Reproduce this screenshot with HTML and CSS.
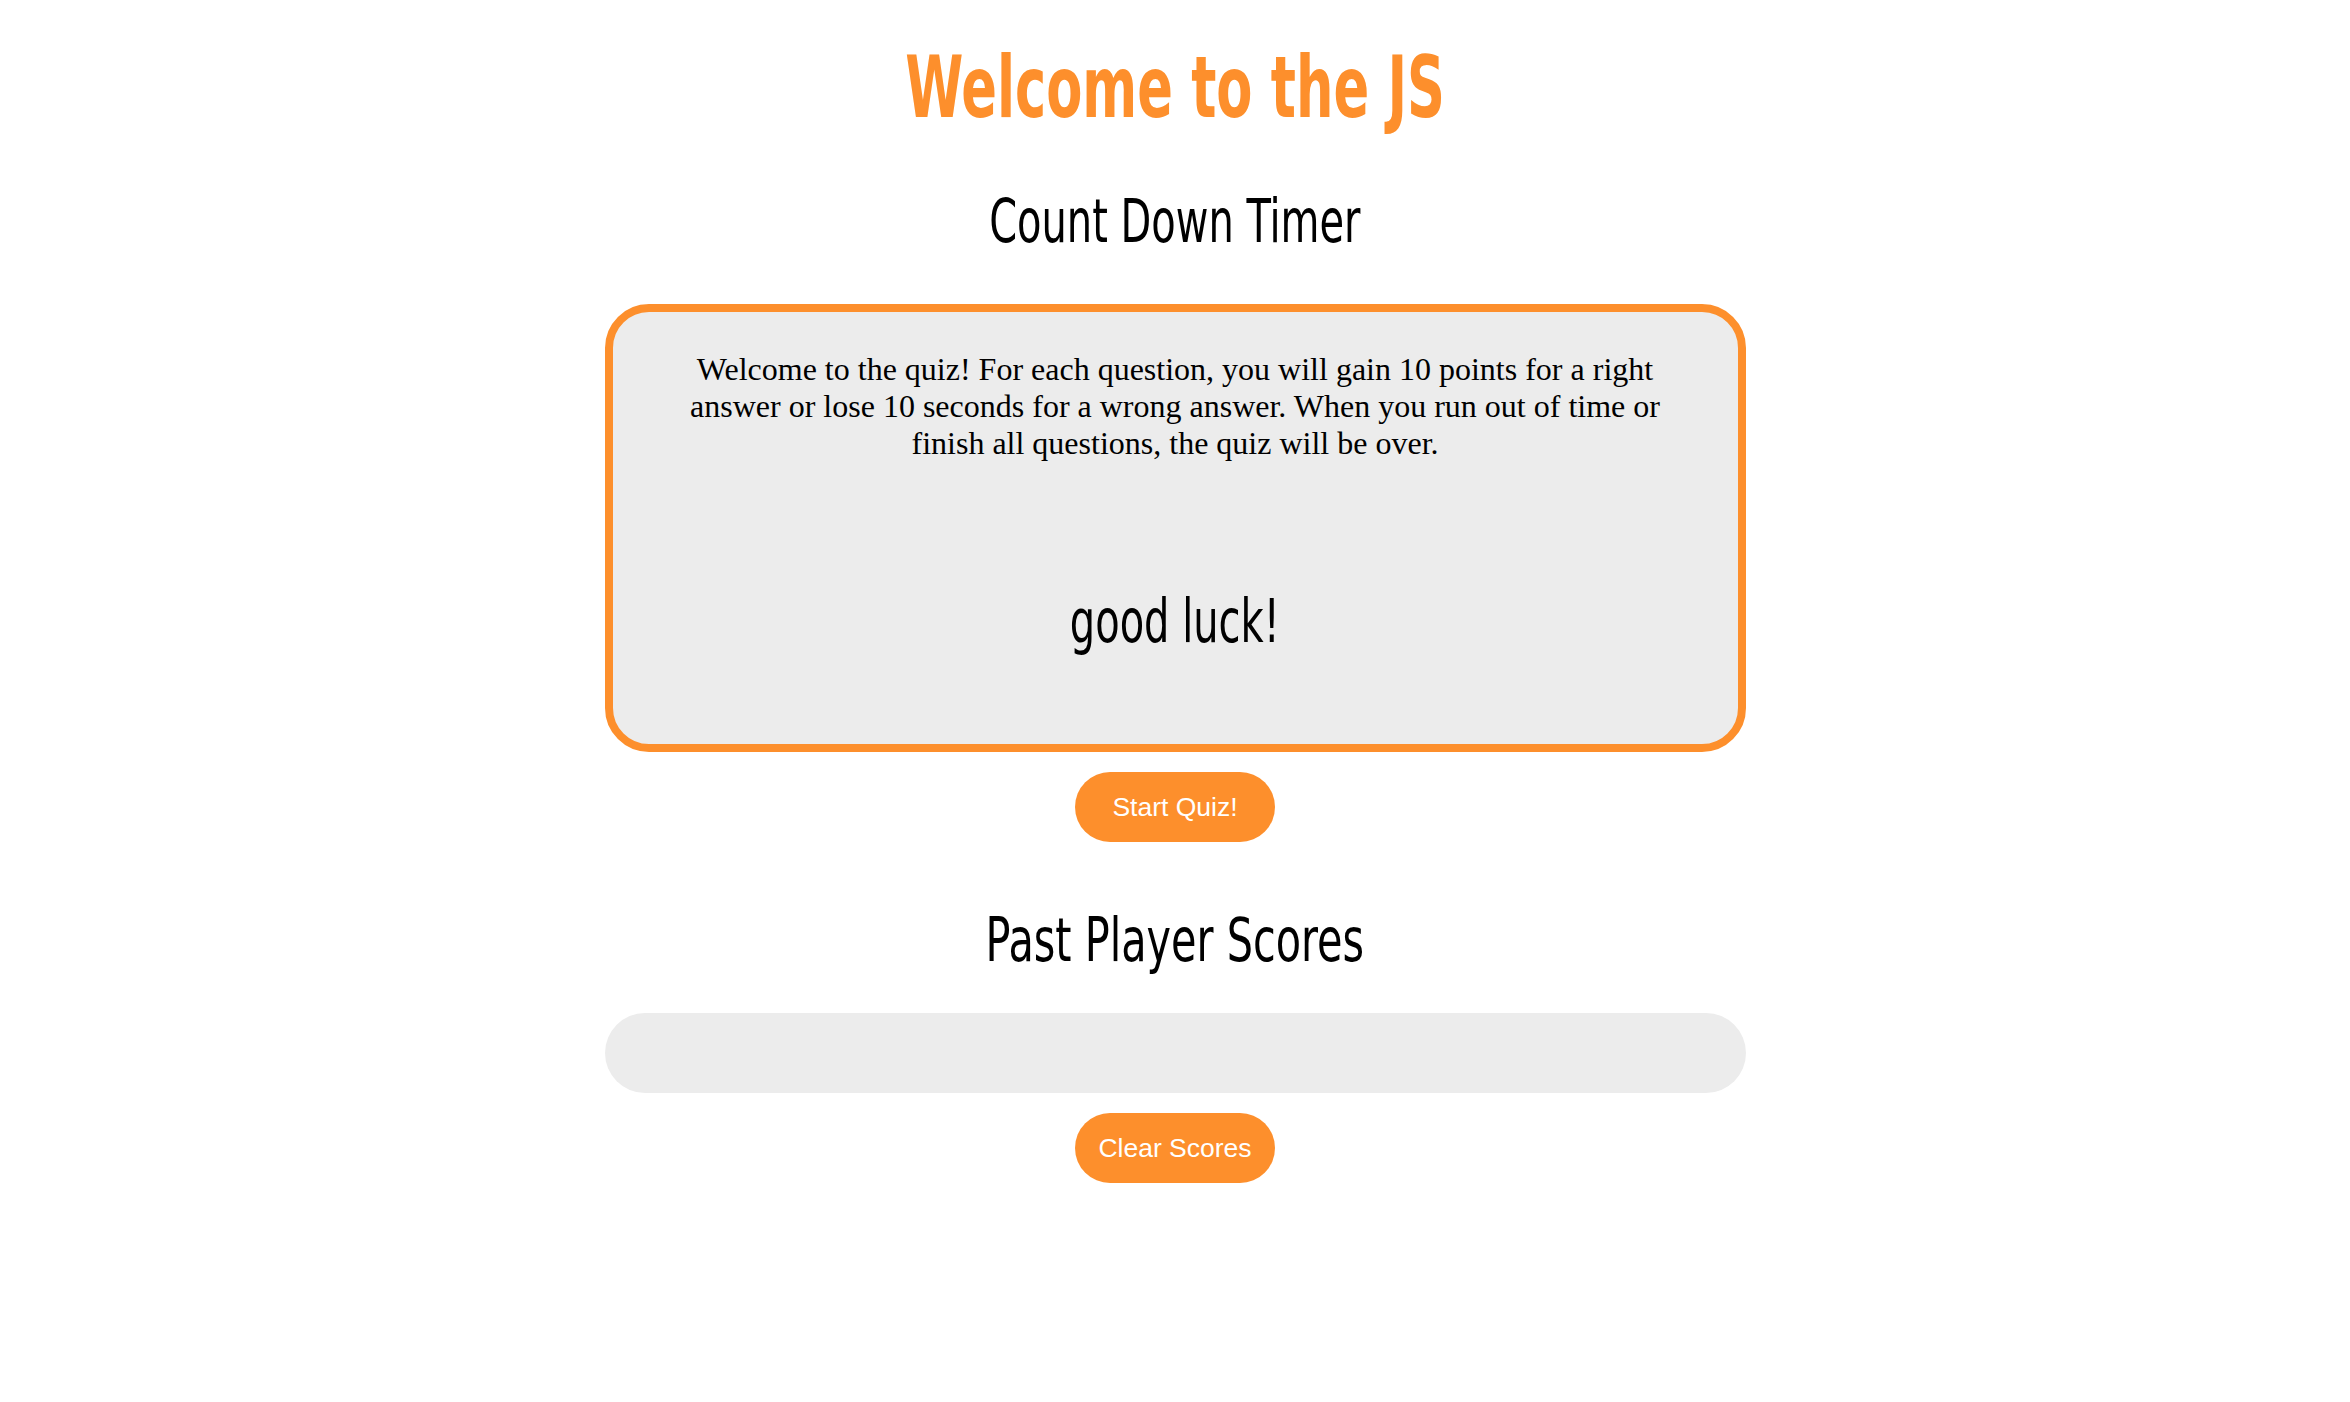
FILE: index.html
```html
<!DOCTYPE html>
<html lang="en">
<head>
<meta charset="utf-8">
<title>JS Quiz</title>
<link rel="stylesheet" href="styles.css">
</head>
<body>
<main class="page">
  <h1 class="title"><span class="squeeze-bold">Welcome to the JS</span></h1>
  <h2 class="heading timer-heading"><span class="squeeze">Count Down Timer</span></h2>

  <section class="quiz-box">
    <p class="intro">Welcome to the quiz! For each question, you will gain 10 points for a right answer or lose 10 seconds for a wrong answer. When you run out of time or finish all questions, the quiz will be over.</p>
    <h2 class="heading luck"><span class="squeeze">good luck!</span></h2>
  </section>

  <button class="pill-btn start-btn" type="button">Start Quiz!</button>

  <h2 class="heading scores-heading"><span class="squeeze squeeze-wide">Past Player Scores</span></h2>
  <div class="scores-list"></div>
  <button class="pill-btn clear-btn" type="button">Clear Scores</button>
</main>
</body>
</html>
```

FILE: styles.css
```css
html, body {
  margin: 0;
  padding: 0;
  background: #ffffff;
}

body {
  font-family: "DejaVu Sans Condensed", "DejaVu Sans", sans-serif;
  color: #000000;
}

.page {
  display: flex;
  flex-direction: column;
  align-items: center;
  padding-top: 45px;
}

.title {
  margin: 0;
  font-size: 85px;
  line-height: 85px;
  font-weight: bold;
  color: #fd8f2c;
  text-align: center;
}

.squeeze-bold {
  display: inline-block;
  transform: scaleX(0.688);
}

.squeeze {
  display: inline-block;
  transform: scaleX(0.74);
}

.squeeze-wide {
  transform: scaleX(0.767);
}

.heading {
  margin: 0;
  font-size: 60px;
  line-height: 60px;
  font-weight: normal;
  text-align: center;
}

.timer-heading {
  margin-top: 61px;
}

.quiz-box {
  box-sizing: border-box;
  width: 1141px;
  margin-top: 53px;
  padding: 39px 70px 93px;
  border: 8px solid #fd8f2c;
  border-radius: 44px;
  background: #ececec;
  display: flex;
  flex-direction: column;
  align-items: center;
}

.intro {
  margin: 0;
  font-family: "Liberation Serif", "Times New Roman", serif;
  font-size: 32px;
  line-height: 37px;
  text-align: center;
}

.luck {
  margin-top: 129px;
}

.pill-btn {
  box-sizing: border-box;
  width: 200px;
  height: 70px;
  margin-top: 20px;
  padding: 0;
  border: none;
  border-radius: 35px;
  background: #fd8f2c;
  color: #ffffff;
  font-family: "Liberation Sans", Arial, sans-serif;
  font-size: 26.5px;
  cursor: pointer;
}

.scores-heading {
  margin-top: 68px;
}

.scores-list {
  width: 1141px;
  height: 80px;
  margin-top: 43px;
  border-radius: 40px;
  background: #ececec;
}
```
